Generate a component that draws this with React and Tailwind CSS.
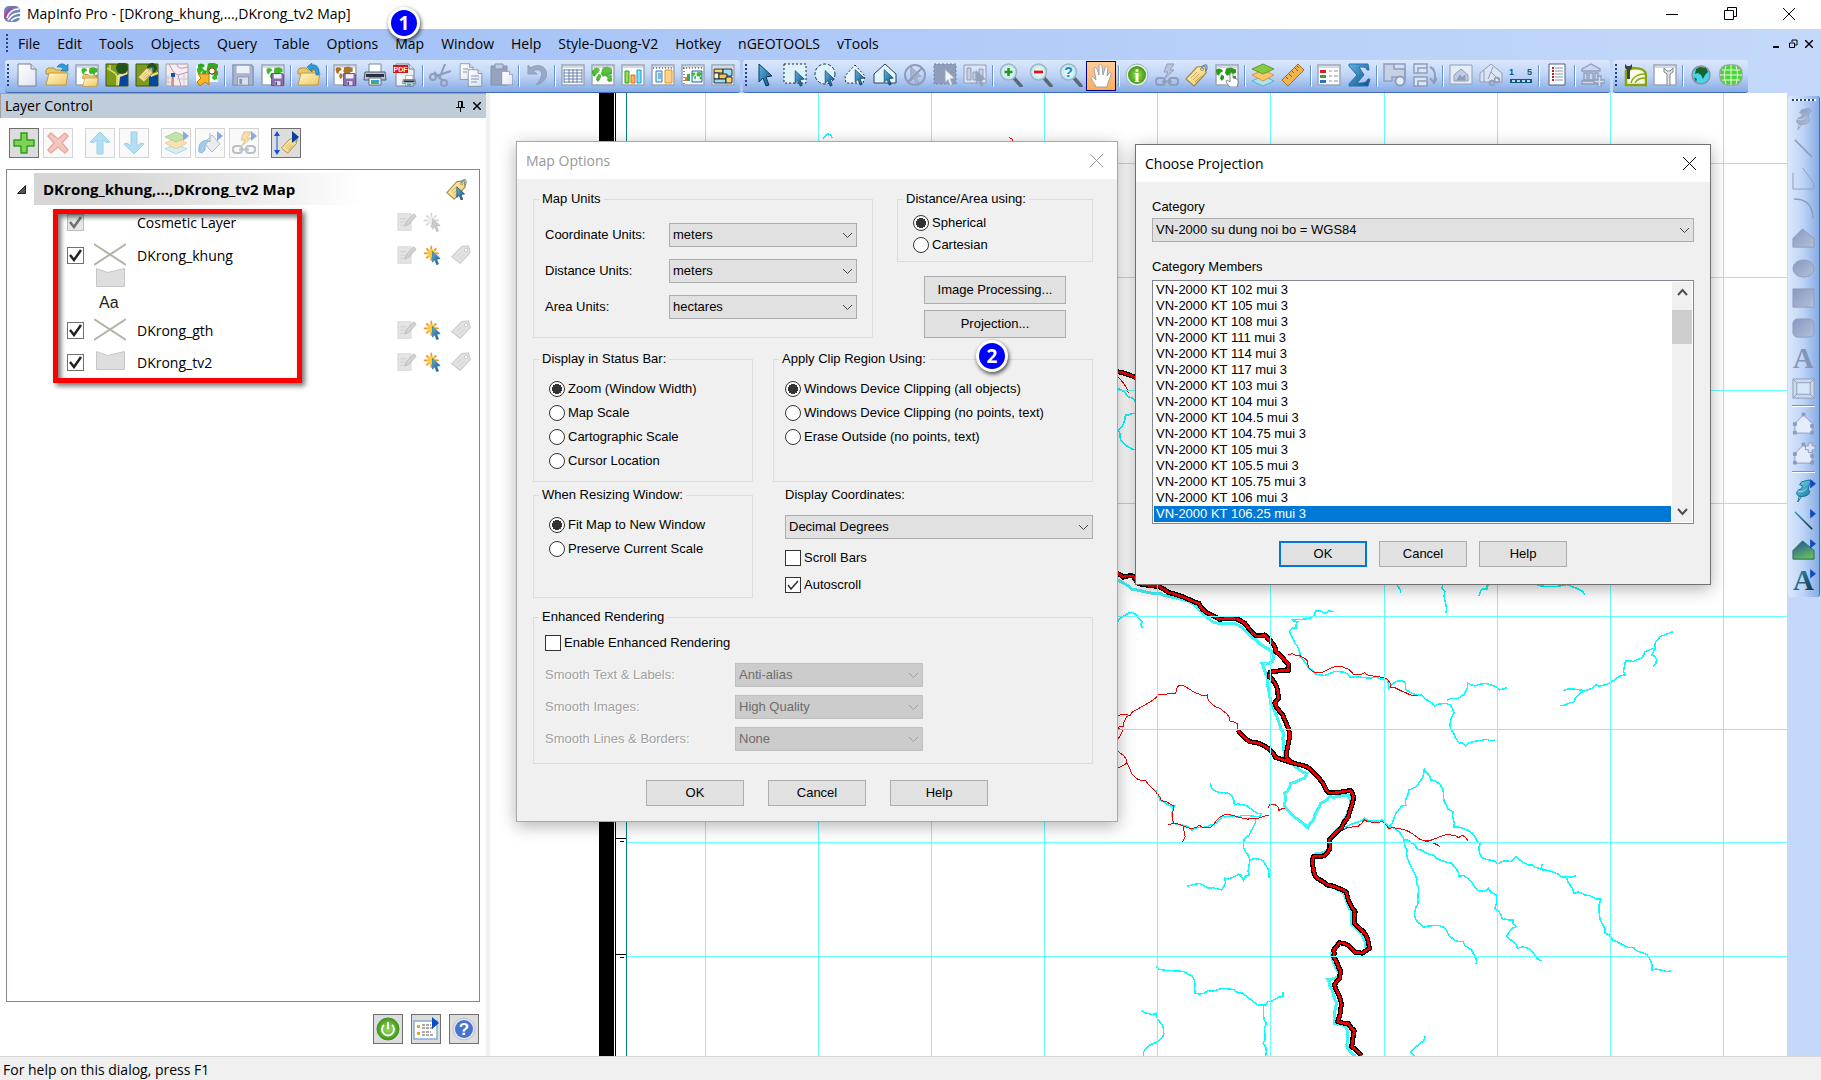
import { clsx } from "clsx";

/* ---------- small drawing parts shared by the toolbar icons ---------- */

const Gradients = () => (
  <svg className="absolute h-0 w-0" aria-hidden="true">
    <defs>
      <linearGradient id="gold" x1="0" y1="0" x2="1" y2="1">
        <stop offset="0" stopColor="#fff8cc" />
        <stop offset="1" stopColor="#eec762" />
      </linearGradient>
      <linearGradient id="blue" x1="0" y1="0" x2="1" y2="1">
        <stop offset="0" stopColor="#5fb4e6" />
        <stop offset="1" stopColor="#0d4f80" />
      </linearGradient>
      <linearGradient id="teal" x1="0" y1="0" x2="1" y2="1">
        <stop offset="0" stopColor="#7fe3f4" />
        <stop offset="1" stopColor="#0b6f96" />
      </linearGradient>
      <linearGradient id="ink" x1="0" y1="0" x2="1" y2="1">
        <stop offset="0" stopColor="#3aa0c8" />
        <stop offset="1" stopColor="#0b2a3c" />
      </linearGradient>
      <linearGradient id="land" x1="0" y1="0" x2="0.4" y2="1">
        <stop offset="0" stopColor="#1f4f9e" />
        <stop offset="1" stopColor="#5fb760" />
      </linearGradient>
      <linearGradient id="steel" x1="0" y1="0" x2="1" y2="1">
        <stop offset="0" stopColor="#8799c0" />
        <stop offset="1" stopColor="#b4c0da" />
      </linearGradient>
      <linearGradient id="paper" x1="0" y1="0" x2="1" y2="1">
        <stop offset="0" stopColor="#ffffff" />
        <stop offset="1" stopColor="#dfe4ef" />
      </linearGradient>
      <radialGradient id="green">
        <stop offset="0" stopColor="#9be05a" />
        <stop offset="1" stopColor="#3d9a17" />
      </radialGradient>
      <radialGradient id="lens">
        <stop offset="0" stopColor="#ffffff" />
        <stop offset="1" stopColor="#b4e6f2" />
      </radialGradient>
    </defs>
  </svg>
);

function Icon({ children, size = 24, className }) {
  return (
    <svg width={size} height={size} viewBox="0 0 24 24" fill="none" className={clsx("shrink-0", className)} aria-hidden="true">
      {children}
    </svg>
  );
}

const Folder = ({ t }) => (
  <g transform={t}>
    <path d="M1 7l2-2h6l2 2h10v4H1z" fill="#ecc76a" stroke="#b58f3a" />
    <path d="M1 22L4 10h19l-2 12z" fill="url(#gold)" stroke="#c29a40" />
  </g>
);
const Disk = ({ t, fill = "#8d6db0", edge = "#5d4383" }) => (
  <g transform={t}>
    <path d="M1 1h20l2 2v20H1z" fill={fill} stroke={edge} strokeWidth="1.5" />
    <path d="M5 2h14v8H5z" fill="#eef0f8" />
    <path d="M6 14h12v9H6z" fill="#dcdfea" stroke={edge} />
    <path d="M8 16h3v6H8z" fill={edge} />
  </g>
);
const Frame = ({ children }) => (
  <g>
    <path d="M1 2h22v20H1z" fill="#fff" stroke="#9aa6b6" strokeWidth="1.5" />
    <path d="M2 3h20v2H2z" fill="#d4dae4" />
    {children}
  </g>
);
const Land = ({ t, c = "#3fb52c" }) => (
  <g transform={t} fill={c}>
    <path d="M2 6l3-1 3 1 1 2-3 2-1 3-2-1-1-3zM7 12l3 1v3l-2 3-2-3zM12 5l5-1 5 2v4l-3 1-1 3-3-2-2 1-2-3zM18 14l4-1v5l-3 1-2-2z" />
  </g>
);
const Pointer = ({ t, fill = "url(#blue)", edge = "#0b3d60" }) => (
  <path transform={t} d="M6 1v18l4-4 3 8 3-1-3-8 6-1z" fill={fill} stroke={edge} />
);
const TagShape = ({ t, fill = "url(#gold)", edge = "#a88a3c" }) => (
  <g transform={t}>
    <path d="M2 16L13 4l8-1 1 7-12 13z" fill={fill} stroke={edge} strokeWidth="1.2" strokeLinejoin="round" />
    <circle cx="18" cy="6" r="1.5" fill="#fff" stroke={edge} />
    <path d="M7 15l6-6M9 17l6-6M11 19l6-6" stroke={edge} strokeWidth=".7" />
    <path d="M18 6c0-4 5-6 5-2s-2 4-2 4" stroke="#4d8dc8" strokeWidth="1.2" />
  </g>
);
const PageShape = ({ t }) => (
  <g transform={t}>
    <path d="M3 1h13l5 5v17H3z" fill="url(#paper)" stroke="#74829c" />
    <path d="M16 1v5h5" fill="#dbe3f0" stroke="#74829c" />
  </g>
);
const PrinterShape = ({ t }) => (
  <g transform={t}>
    <path d="M6 1h12v9H6z" fill="#fff" stroke="#78889c" />
    <path d="M2 9h20l1 8H1z" fill="#b9c3d2" stroke="#4c5a70" />
    <path d="M3 11h18v3H3z" fill="#27303e" />
    <path d="M6 15h12v7H6z" fill="#fff" stroke="#5c6a7c" />
    <path d="M8 17h8v4H8z" fill="#3aa2d8" />
    <path d="M8 20l3-2 5 3H8z" fill="#49b13a" />
  </g>
);
const Lens = ({ children }) => (
  <g>
    <path d="M15 15l7 8" stroke="#5b6873" strokeWidth="3.5" strokeLinecap="round" />
    <circle cx="9.500" cy="9" r="8" fill="url(#lens)" stroke="#9fb4bd" strokeWidth="1.5" />
    {children}
  </g>
);
const Chain = ({ edge }) => (
  <g stroke={edge} strokeWidth="2">
    <rect x="1" y="15" width="9" height="7" rx="3" />
    <rect x="14" y="15" width="9" height="7" rx="3" />
    <path d="M7 18.500h10" />
  </g>
);
const Stack = () => (
  <g strokeWidth=".8">
    <path d="M12 13l11 5-11 5-11-5z" fill="#a9e5f0" stroke="#49a9bf" />
    <path d="M12 7l11 5-11 6-11-6z" fill="#fbc665" stroke="#d98b1d" />
    <path d="M12 1l11 5-11 5L1 6z" fill="#85cc45" stroke="#4a8f1c" />
  </g>
);
const House = ({ plus }) => (
  <g stroke="#8c9cc0">
    <path d="M3 11l9-9 9 9v10H3z" fill="#e4ecfa" />
    <path d="M1.500 19h3v3h-3zM19.500 19h3v3h-3zM1.500 10h3v3h-3zM19.500 12h3v3h-3zM10.500 0h3v3h-3z" fill="#8c9cc0" />
    {plus && <path d="M17 0h4v3h3v4h-3v3h-4V7h-3V3h3z" fill="#dde5f5" />}
  </g>
);
const PinShape = ({ fill, edge }) => (
  <g stroke={edge} strokeWidth="1">
    <path d="M8 16l-2 8 5-7z" fill="#d7dbe3" />
    <path d="M10 3l8-2 3 3-3 2-1 5c3 2 1 6-4 7s-9-1-8-4 3-3 5-4l1-3-3-1z" fill={fill} />
    <path d="M6 13c3 1 7 0 9-3" stroke="#fff" strokeOpacity=".5" />
  </g>
);
const Flag = () => <path d="M19 0l6 5-6 5z" fill="#0a4bc4" />;
const Letter = ({ fill }) => (
  <text x="12" y="22" textAnchor="middle" fontFamily="Liberation Serif, serif" fontWeight="700" fontSize="30" fill={fill}>
    A
  </text>
);

const GREY = "#8f9dba";

const icons = {
  "New Table": <PageShape />,
  Open: (
    <>
      <Folder />
      <path d="M12 4c3-4 7-4 9-1l2-2v7h-7l2-2c-1-2-3-2-6-2z" fill="#2f9bd8" stroke="#1d6ba0" strokeWidth=".6" />
    </>
  ),
  "Open Workspace": (
    <>
      <path d="M1 5h16v16H1z" fill="#fff" stroke="#7d8896" />
      <Frame />
      <Land t="translate(5 1) scale(.8)" />
      <Folder t="translate(7 8) scale(.7)" />
    </>
  ),
  "Open Web Map": (
    <>
      <path d="M1 1h22v22H1z" fill="#7c9c1c" />
      <path d="M12 11h11v12h-9z" fill="#0645a0" />
      <path d="M12 12l11-4v3l-8 3-1 9h-3z" fill="#f2e08a" />
      <circle cx="17" cy="5" r="6" fill="#24521a" />
      <path d="M2 5l8 5 2 3v9M5 2v6" stroke="#d4da70" strokeWidth="1.500" />
      <path d="M1 1h22v22H1z" stroke="#3c5510" />
    </>
  ),
  "Label Map": (
    <>
      <path d="M1 1h22v22H1z" fill="#7c9c1c" stroke="#3c5510" />
      <path d="M14 12h9v11h-9z" fill="#0645a0" />
      <circle cx="17" cy="5" r="5" fill="#24521a" />
      <path d="M15 12l8-3v2l-7 3z" fill="#f2e08a" />
      <TagShape t="translate(2 3) scale(.7)" />
    </>
  ),
  "Street Map": (
    <>
      <path d="M1 1h22v22H1z" fill="#f2eeea" stroke="#a5a3a8" />
      <path d="M4 1l5 9 4 2 10-3M8 11l-2 12M12 1c1 6 6 4 11 3M13 12l3 11" stroke="#c98ad4" />
      <path d="M1 15h6M1 19h6M3 12v11M12 16h11M19 10v13" stroke="#bab4c4" strokeWidth=".7" />
      <path d="M6 10h4v4H6z" fill="#1a4fb0" />
      <path d="M8 14v9" stroke="#d6342a" />
    </>
  ),
  "Find Place": (
    <>
      <path d="M1 2h22v17H1z" fill="#f3fff0" />
      <Land t="scale(1 .9)" />
      <Land t="translate(1 -4) scale(1 .9)" c="#2fa822" />
      <circle cx="17" cy="8" r="3" fill="#fff" stroke="#c8321c" />
      <path d="M15 10l-4 4" stroke="#c8321c" />
      <path d="M3 11h11v11l-4-3-5 4-3-4 4-4z" fill="#f9b62c" stroke="#b9780a" />
    </>
  ),
  "Save Table": <Disk t="translate(1 1) scale(.92)" fill="#a9b5cf" edge="#8694b5" />,
  "Save Workspace": (
    <>
      <path d="M1 5h15v16H1z" fill="#fff" stroke="#7d8896" />
      <Frame />
      <Land t="translate(4 1) scale(.8)" />
      <Disk t="translate(10 10) scale(.55)" />
    </>
  ),
  "Close Table": (
    <>
      <Folder />
      <path d="M14 2c5-1 9 2 8 10h-3c0-4-1-6-4-6v3l-5-5 5-4z" fill="#2f9bd8" stroke="#1d6ba0" strokeWidth=".6" />
    </>
  ),
  "Save Image": (
    <>
      <Frame />
      <Land t="translate(1 0) scale(.85)" c="#a8742c" />
      <Disk t="translate(10 10) scale(.55)" />
    </>
  ),
  Print: <PrinterShape />,
  "Print PDF": (
    <>
      <PageShape />
      <path d="M0 2h15v8H0z" fill="#d81313" />
      <text x="7.500" y="9" textAnchor="middle" fontFamily="Liberation Sans, sans-serif" fontWeight="700" fontSize="7" fill="#fff">
        PDF
      </text>
      <PrinterShape t="translate(9 12) scale(.6 .5)" />
    </>
  ),
  Cut: (
    <g stroke={GREY} strokeWidth="2">
      <path d="M16 1L10 16M5 9l9 9" />
      <circle cx="4" cy="14" r="3" />
      <circle cx="15" cy="20" r="3" />
      <path d="M7 13l15-5" />
    </g>
  ),
  Copy: (
    <>
      <PageShape t="translate(-1 0) scale(.72)" />
      <PageShape t="translate(7 6) scale(.75)" />
      <path d="M4 6h5M4 9h4M12 13h8M12 16h8M12 19h6" stroke="#7d93bb" />
    </>
  ),
  Paste: (
    <>
      <path d="M2 3h16v19H2z" fill="#95a3bf" stroke="#8190ae" />
      <path d="M6 1h8v5H6z" fill="#c3cce0" stroke="#8190ae" />
      <PageShape t="translate(11 8) scale(.6)" />
    </>
  ),
  Undo: <path d="M3 2v9h9L8 8c5-3 11 0 8 6-1 3-3 6-5 8 8-2 12-8 10-14C19 2 11 1 6 5z" fill={GREY} fillOpacity=".8" stroke={GREY} />,
  "New Browser": (
    <Frame>
      <path d="M3 7h18M3 10h18M3 13h18M3 16h18M3 19h18M3 6v14M8 6v14M12 6v14M16 6v14M21 6v14" stroke="#5874a8" strokeWidth=".9" />
    </Frame>
  ),
  "New Mapper": (
    <Frame>
      <Land t="translate(-1 2) scale(1 .9)" />
      <Land t="translate(1 0) scale(.9)" c="#5abf42" />
    </Frame>
  ),
  "New Grapher": (
    <Frame>
      <path d="M4 8h4v12H4z" fill="#8ee05a" stroke="#2f9a1c" />
      <path d="M10 12h4v8h-4z" fill="#ffb25a" stroke="#e06f10" />
      <path d="M16 7h4v13h-4z" fill="#86e0fa" stroke="#1a9ccc" />
    </Frame>
  ),
  "New Layout": (
    <Frame>
      <path d="M2 5h20" stroke="#222" strokeDasharray="1 2" />
      <path d="M5 8h6v11H5z" fill="#d8ecfa" stroke="#2c7cc0" />
      <path d="M7 11h3M7 13h3M7 15h3" stroke="#2c7cc0" />
      <path d="M14 7h7v13h-7z" fill="#ffd38a" stroke="#e49324" />
    </Frame>
  ),
  "Layout Designer": (
    <Frame>
      <path d="M2 5h20M3 5v16" stroke="#222" strokeDasharray="1 2" />
      <path d="M4 14h2v4H4z" fill="#f07a1c" />
      <path d="M6 11h3v7H6z" fill="#2eaa62" />
      <path d="M11 8h10v11H11z" fill="#e8f5ff" stroke="#225fa8" />
      <Land t="translate(10 7) scale(.5)" />
    </Frame>
  ),
  Redistricter: (
    <Frame>
      <g stroke="#162b3a">
        <path d="M3 6h9v4H3z" fill="#ffd267" />
        <path d="M12 6h9v7h-9z" fill="#9fdcf6" />
        <path d="M3 10h5v6H3z" fill="#fff3c4" />
        <path d="M8 11h8v5H8z" fill="#ffc24a" />
        <path d="M3 16h12v4H3z" fill="#9fdcf6" />
        <path d="M15 14h6v6h-6z" fill="#ffd267" />
      </g>
    </Frame>
  ),
  Select: <Pointer />,
  "Marquee Select": (
    <>
      <path d="M1 1h22v19H1z" fill="#dff1fb" stroke="#16283c" strokeDasharray="2 2" />
      <Pointer t="translate(8 7) scale(.7)" />
    </>
  ),
  "Radius Select": (
    <>
      <circle cx="12" cy="11" r="10" fill="#dff1fb" stroke="#16283c" strokeDasharray="3 2" />
      <Pointer t="translate(8 7) scale(.7)" />
    </>
  ),
  "Polygon Select": (
    <>
      <path d="M12 2l10 11-2 7H3l-1-7z" fill="#eaf6fc" stroke="#16283c" strokeDasharray="2 2" />
      <Pointer t="translate(8 6) scale(.7)" />
    </>
  ),
  "Boundary Select": (
    <>
      <path d="M12 1l11 10v9H1v-9z" fill="#e4f4fd" stroke="#26435c" />
      <Pointer t="translate(7 6) scale(.7)" />
    </>
  ),
  "Unselect All": (
    <>
      <Pointer t="translate(3 3) scale(.8)" fill="#a9b6d2" edge={GREY} />
      <circle cx="12" cy="12" r="10" stroke={GREY} strokeWidth="2" />
      <path d="M5 19L19 5" stroke={GREY} strokeWidth="2" />
    </>
  ),
  "Invert Selection": (
    <>
      <path d="M1 1h22v20H1z" fill={GREY} stroke="#7986a5" strokeDasharray="2 2" />
      <Pointer t="translate(8 6) scale(.7)" fill="#f4f6fa" edge="#aab4ca" />
    </>
  ),
  "Graph Select": (
    <>
      <path d="M1 2h22v18H1z" fill="#dce5f5" stroke={GREY} />
      <path d="M4 5h4v12H4zM10 9h3v8h-3zM16 6h4v11h-4z" fill="#c4cfe4" stroke={GREY} />
      <Pointer t="translate(9 7) scale(.7)" fill="#94a2c0" edge={GREY} />
    </>
  ),
  "Zoom In": (
    <Lens>
      <path d="M9.500 5v8M5.500 9h8" stroke="#1f9a10" strokeWidth="2.500" />
    </Lens>
  ),
  "Zoom Out": (
    <Lens>
      <path d="M5 9h9" stroke="#e01414" strokeWidth="2.800" />
    </Lens>
  ),
  "Change View": (
    <Lens>
      <text x="9.500" y="14" textAnchor="middle" fontFamily="Liberation Sans, sans-serif" fontWeight="700" fontSize="14" fill="#1487b8">
        ?
      </text>
    </Lens>
  ),
  Pan: (
    <path
      d="M7 23c-1-3-4-6-5-9 0-2 2-2 3 0l2 2-2-11c0-2 2-2 3 0l2 6V2c0-2 3-2 3 0l1 9 2-7c0-2 3-2 3 0l-1 8 2-3c1-1 3 0 2 2l-3 8-1 4z"
      fill="#fff"
      stroke="#98a0ac"
    />
  ),
  Info: (
    <>
      <circle cx="12" cy="12" r="11" fill="#e9eef0" stroke="#a5b1b5" />
      <circle cx="12" cy="12" r="9" fill="url(#green)" />
      <text x="12" y="18.500" textAnchor="middle" fontFamily="Liberation Serif, serif" fontWeight="700" fontSize="19" fill="#fff">
        i
      </text>
    </>
  ),
  HotLink: (
    <>
      <path d="M12 1h7l-4 6h4l-9 8 3-6H9z" fill="#b9c4da" stroke={GREY} />
      <Chain edge={GREY} />
    </>
  ),
  Label: <TagShape t="translate(-1 0)" />,
  "Drag Map": (
    <>
      <Frame />
      <Land t="translate(-1 1) scale(1 .9)" c="#2a9a1c" />
      <path d="M15 24c-3-3-5-6-3-7l3 2v-8c1-2 2-1 3 0v4l4 1c2 1 1 5 0 8z" fill="#fff" stroke="#7e8790" />
    </>
  ),
  "Layer Control": <Stack />,
  Ruler: (
    <>
      <path d="M1 17L17 1l6 6L7 23z" fill="#f0b552" stroke="#a5681c" />
      <path d="M5 14l2 2M8 11l3 3M11 8l2 2M14 5l3 3M16 3l2 2" stroke="#8a5a18" />
    </>
  ),
  "Show Legend": (
    <Frame>
      <path d="M3 7h6v3H3z" fill="#e02020" />
      <path d="M3 12h6v3H3z" fill="#38a33a" />
      <path d="M3 17h6v3H3z" fill="#2f70c4" />
      <path d="M12 8h3M17 8h4M12 13h3M17 13h4M12 18h3M17 18h4" stroke="#8391a8" />
    </Frame>
  ),
  Statistics: <path d="M2 1h19l1 6h-2c-1-3-2-3-8-3l5 8-7 8c7 0 9 0 11-4h2l-2 7H2v-2l8-9-8-9z" fill="url(#blue)" stroke="#276fb0" />,
  "Set Target": (
    <g stroke={GREY} strokeWidth="1.500">
      <path d="M1 1h10v5h11v12h-8v-4H9v4H1z" fill="#c6d1e6" />
      <path d="M11 1h11v16" />
      <circle cx="17" cy="18" r="4.500" fill="#e6ecf7" strokeWidth="2" />
    </g>
  ),
  "Assign Objects": (
    <g stroke={GREY} strokeWidth="1.500">
      <path d="M1 1h13v9H1zM5 5h9v5H5zM1 14h13v9H1zM5 18h9v5H5z" fill="#dbe4f4" />
      <path d="M17 4c5 2 6 8 4 14M17 15l4 5 3-5" strokeWidth="2" />
    </g>
  ),
  "Clip Region": (
    <g stroke={GREY}>
      <path d="M1 2h22v19H1z" fill="#e6ecf6" />
      <path d="M5 12l7-6 7 6v6H5z" fill="#c1cce2" />
      <path d="M8 17l3-5 2 3 3-3v5z" fill={GREY} />
    </g>
  ),
  "Set Clip Region": (
    <g stroke={GREY}>
      <path d="M1 10l11-9 11 9v9H1z" fill="#dce5f4" />
      <path d="M5 19V7M9 16l5-12M12 9l8 8" />
      <circle cx="13" cy="20" r="2.500" strokeWidth="1.500" />
      <circle cx="18" cy="17" r="2.500" strokeWidth="1.500" />
    </g>
  ),
  "Scale Bar": (
    <>
      <path d="M1 16h22v4H1z" fill="#0b5a7a" />
      <path d="M3 18h18" stroke="#fff" strokeWidth="1.500" strokeDasharray="3 2" />
      <text x="0" y="12" fontFamily="Liberation Sans, sans-serif" fontSize="9" fontWeight="700" fill="#0b5a7a">
        1
      </text>
      <text x="18" y="12" fontFamily="Liberation Sans, sans-serif" fontSize="9" fontWeight="700" fill="#0b5a7a">
        5
      </text>
    </>
  ),
  "Library Items": (
    <>
      <path d="M4 1h16v21H4z" fill="#fff" stroke="#4d6080" />
      <path d="M7 5h2M7 8h2M7 11h2M7 14h2M7 17h2" stroke="#c02020" strokeWidth="2" />
      <path d="M10 5h8M10 8h8M10 11h8M10 14h8M10 17h8" stroke="#8b97aa" />
    </>
  ),
  "Data Bank": (
    <g stroke={GREY} strokeWidth="1.300">
      <path d="M1 6l9-5 9 5v2H1zM3 10h3v7H3zM8 10h4v7H8zM14 10h3v7h-3zM1 18h18v3H1z" fill="#ccd6ea" />
      <path d="M17 13h3v4h4v3h-4v4h-3v-4h-4v-3h4z" fill="#d4def0" />
    </g>
  ),
  "Geo Tools": (
    <>
      <path d="M3 8v14h20V13C23 7 19 5 10 5z" fill="#f7fbe6" stroke="#8aa30c" strokeWidth="2.500" />
      <path d="M8 20c2-7 7-9 14-9M12 20c2-4 5-5 10-5" stroke="#8aa81c" strokeWidth="1.500" />
      <path d="M2 1v4l2 2v9h3V7l2-2V1L7 3H4z" fill="#3c4146" />
    </>
  ),
  "Tool Settings": (
    <Frame>
      <path d="M11 5v4l3 2v10c0 2 3 2 3 0V11l3-2V5l-3 3h-3z" fill="#e0e4ea" stroke="#7d858f" />
    </Frame>
  ),
  Globe: (
    <>
      <circle cx="12" cy="12" r="9" fill="#46d4f0" stroke="#8e9296" strokeWidth="1.500" />
      <path d="M7 6l4-2 6 1 2 4-3 3-2 4-2-4-3-2-3 1zM5 14l3 2-1 3z" fill="#14672a" />
    </>
  ),
  "Web Globe": (
    <>
      <rect x="1" y="2" width="22" height="20" rx="8" fill="#4fd03c" stroke="#9aa6a4" strokeWidth="1.500" />
      <path d="M12 2v20M1 12h22M3 7h18M3 17h18M7 3c-2 6-2 12 0 18M17 3c2 6 2 12 0 18" stroke="#e4ffdf" />
    </>
  ),
};

const drawTools = [
  { name: "Symbol", art: <PinShape fill="url(#steel)" edge="#9aa7c2" /> },
  { name: "Line", art: <path d="M3 3l18 18" stroke={GREY} strokeWidth="1.500" /> },
  { name: "Polyline", art: <path d="M1 6v17h22v-6L11 1" stroke={GREY} /> },
  { name: "Arc", art: <path d="M2 2c12 0 19 5 20 20" stroke={GREY} strokeWidth="1.500" /> },
  { name: "Polygon", art: <path d="M1 12L11 2l12 10v9H1z" fill="url(#steel)" stroke={GREY} /> },
  { name: "Ellipse", art: <ellipse cx="12" cy="12" rx="11" ry="9" fill="url(#steel)" stroke={GREY} /> },
  { name: "Rectangle", art: <path d="M1 2h22v19H1z" fill="url(#steel)" stroke={GREY} /> },
  { name: "Rounded Rectangle", art: <rect x="1" y="2" width="22" height="19" rx="5" fill="url(#steel)" stroke={GREY} /> },
  { name: "Text", art: <Letter fill="#8595b8" /> },
  {
    name: "Frame",
    art: (
      <>
        <path d="M1 2h22v20H1z" fill="#cdd8ea" stroke={GREY} />
        <path d="M5 6h14v12H5z" fill="#d9e6fa" stroke={GREY} />
        <path d="M1 2l4 4M23 2l-4 4M1 22l4-4M23 22l-4-4" stroke={GREY} />
      </>
    ),
  },
  null,
  { name: "Reshape", art: <House /> },
  { name: "Add Node", art: <House plus /> },
  null,
  { name: "Symbol Style", art: <><PinShape fill="url(#teal)" edge="#126f94" /><Flag /></> },
  { name: "Line Style", art: <><path d="M3 3l18 18" stroke="url(#ink)" strokeWidth="1.500" /><Flag /></> },
  { name: "Region Style", art: <><path d="M1 12L11 2l12 10v9H1z" fill="url(#land)" stroke="#2f6b52" /><Flag /></> },
  { name: "Text Style", art: <><Letter fill="url(#ink)" /><Flag /></> },
];

const toolbars = [
  [
    ["New Table", "Open", "Open Workspace", "Open Web Map", "Label Map", "Street Map", "Find Place"],
    ["Save Table", "Save Workspace"],
    ["Close Table"],
    ["Save Image", "Print", "Print PDF"],
    ["Cut", "Copy", "Paste"],
    ["Undo"],
    ["New Browser", "New Mapper", "New Grapher", "New Layout", "Layout Designer", "Redistricter"],
  ],
  [
    ["Select", "Marquee Select", "Radius Select", "Polygon Select", "Boundary Select", "Unselect All", "Invert Selection", "Graph Select"],
    ["Zoom In", "Zoom Out", "Change View", "Pan"],
    ["Info", "HotLink", "Label", "Drag Map"],
    ["Layer Control", "Ruler"],
    ["Show Legend", "Statistics"],
    ["Set Target", "Assign Objects"],
    ["Clip Region", "Set Clip Region", "Scale Bar"],
    ["Library Items"],
    ["Data Bank"],
  ],
  [
    ["Geo Tools", "Tool Settings"],
    ["Globe", "Web Globe"],
  ],
];

/* ---------- window chrome ---------- */

function TitleBar() {
  return (
    <header className="flex h-[29px] items-center bg-white pb-0.5">
      <svg width="16" height="16" viewBox="0 0 16 16" className="ml-1" aria-hidden="true">
        <rect width="16" height="16" rx="5" fill="#6d86b8" />
        <path d="M0 11C1 4 6 1 13 0 6 3 3 6 2 14z" fill="#c23a9e" />
        <path d="M3 12c2-6 6-9 12-9M4 14c3-5 7-7 12-7M7 15c3-3 5-4 9-4" stroke="#fff" strokeWidth="1.500" fill="none" />
      </svg>
      <h1 className="ml-[7px] text-[14px] leading-5">MapInfo Pro - [DKrong_khung,...,DKrong_tv2 Map]</h1>
      <div className="ml-auto flex pr-0.5">
        <button aria-label="Minimize" className="grid h-7 w-[58px] place-items-center">
          <svg width="12" height="12" stroke="#000"><path d="M0 6.500h12" /></svg>
        </button>
        <button aria-label="Restore" className="grid h-7 w-[58px] place-items-center">
          <svg width="13" height="13" fill="none" stroke="#000"><path d="M.5 3.500h9v9h-9zM3.500 3.500v-3h9v9h-3" /></svg>
        </button>
        <button aria-label="Close" className="grid h-7 w-[60px] place-items-center">
          <svg width="12" height="12" stroke="#000"><path d="M0 0l12 12M12 0L0 12" /></svg>
        </button>
      </div>
    </header>
  );
}

const menus = ["File", "Edit", "Tools", "Objects", "Query", "Table", "Options", "Map", "Window", "Help", "Style-Duong-V2", "Hotkey", "nGEOTOOLS", "vTools"];

function MenuBar() {
  return (
    <nav className="flex h-[31px] items-center pb-0.5">
      <span className="ml-1.5 h-5 w-0.5 bg-[repeating-linear-gradient(#27408b_0_2px,transparent_2px_4px)]" />
      <div className="ml-0.5 flex gap-px">
        {menus.map((m) => (
          <button key={m} className="px-2 text-[14px] leading-6">{m}</button>
        ))}
      </div>
      <div className="ml-auto flex pr-1">
        <button aria-label="Minimize map" className="grid h-5 w-4 place-items-center">
          <svg width="8" height="8"><path d="M0 6h6v2H0z" /></svg>
        </button>
        <button aria-label="Restore map" className="grid h-5 w-4 place-items-center">
          <svg width="9" height="9" fill="none" stroke="#000"><path d="M.5 4h5v4.500h-5zM3 3V1h5v5H6" /></svg>
        </button>
        <button aria-label="Close map" className="grid h-5 w-4 place-items-center">
          <svg width="8" height="8" stroke="#000" strokeWidth="1.500"><path d="M0 0l8 8M8 0L0 8" /></svg>
        </button>
      </div>
    </nav>
  );
}

function Toolbar({ groups }) {
  return (
    <div className="flex h-[33px] rounded-[3px] border-b border-[#3f6db5] bg-linear-to-b from-[#dbe8fc] via-[#bdd3f6] to-[#86abe4] pr-0.5">
      <span className="my-1 mr-[3px] ml-0.5 w-0.5 bg-[repeating-linear-gradient(#27408b_0_2px,transparent_2px_4px)]" />
      {groups.map((group, i) => (
        <div key={i} className="flex">
          {i > 0 && <span className="mx-0.5 my-[5px] w-0.5 border-r border-white bg-[#6a93d4]" />}
          {group.map((name) => (
            <button
              key={name}
              aria-label={name}
              className={clsx(
                "grid h-[30px] w-[30px] place-items-center",
                name === "Pan" && "mt-px border border-[#000080] bg-linear-to-b from-[#ffce94] to-[#ffab55]"
              )}
            >
              <Icon>{icons[name]}</Icon>
            </button>
          ))}
        </div>
      ))}
    </div>
  );
}

function DrawToolbar() {
  return (
    <aside className="w-[34px] shrink-0 bg-[#c4d9fa] pt-[3px] pl-px">
      <div className="flex w-8 flex-col items-center rounded-[3px] border-r border-[#3f6db5] bg-linear-to-r from-[#dbe8fc] via-[#bdd3f6] to-[#86abe4] pb-0.5">
        <span className="mt-[3px] mb-0.5 h-0.5 w-6 bg-[repeating-linear-gradient(90deg,#27408b_0_2px,#fff_2px_4px)]" />
        {drawTools.map((t, i) =>
          t ? (
            <button key={i} aria-label={t.name} className="grid h-[30px] w-[30px] place-items-center">
              <Icon size={23} className="overflow-visible">{t.art}</Icon>
            </button>
          ) : (
            <span key={i} className="my-0.5 h-0.5 w-[23px] border-b border-white bg-[#6a93d4]" />
          )
        )}
      </div>
    </aside>
  );
}

/* ---------- layer control ---------- */

const layerButtons = [
  { name: "Add Layers", on: true, art: <path d="M9 2h6v7h7v6h-7v7H9v-7H2V9h7z" fill="#7fd455" stroke="#2f9d1d" strokeWidth="1.500" strokeLinejoin="round" /> },
  { name: "Remove Layers", art: <path d="M2 5l3-3 7 6 7-6 3 3-6 7 6 7-3 3-7-6-7 6-3-3 6-7z" fill="#f08a7c" stroke="#d9483b" strokeWidth="1.500" strokeLinejoin="round" /> },
  { name: "Move Up", gap: true, art: <path d="M12 1l10 10-3 1-4-3v14H9V9l-4 3-3-1z" fill="#5fc0f0" stroke="#2c9fdc" /> },
  { name: "Move Down", art: <path d="M12 23L2 13l3-1 4 3V1h6v14l4-3 3 1z" fill="#5fc0f0" stroke="#2c9fdc" /> },
  { name: "Layer Properties", gap: true, art: <><Stack /><Flag /></> },
  {
    name: "Style Override",
    art: (
      <>
        <path d="M6 12l8-8 8 9-8 8z" fill="#d7dde6" stroke="#5d6b80" />
        <path d="M1 21c-1-9 3-13 11-11-4 1-5 4-5 9l-3 3z" fill="#2f9bd8" stroke="#1d6ba0" />
        <path d="M12 11V2" stroke="#5d6b80" />
        <Flag />
      </>
    ),
  },
  { name: "HotLink Options", art: <><path d="M12 1h7l-4 6h4l-9 8 3-6H9z" fill="#f6c143" stroke="#c08a18" /><Chain edge="#71798a" /><Flag /></> },
  {
    name: "Label Options",
    on: true,
    gap: true,
    art: (
      <>
        <path d="M3 2v20" stroke="#1550d8" />
        <path d="M3 0L0 5h6zM3 24l-3-5h6z" fill="#1550d8" />
        <TagShape t="translate(6 5) scale(.75)" />
        <path d="M18 0l7 6-7 6z" fill="#0a3f9c" />
      </>
    ),
  },
];

function PanelButton({ name, on, gap, children }) {
  return (
    <button
      aria-label={name}
      disabled={!on}
      className={clsx(
        "grid h-[30px] w-[30px] place-items-center border",
        on ? "border-[#707070] bg-[#dddddd]" : "border-[#d4d4d4] bg-[#f9f9f9]",
        gap && "ml-2"
      )}
    >
      <Icon className={clsx("overflow-visible", !on && "opacity-45")}>{children}</Icon>
    </button>
  );
}

const LineSample = () => (
  <svg width="32" height="24" className="block" stroke="#b4b3a8" strokeWidth="2"><path d="M0 1l32 21M32 1L0 22" /></svg>
);
const RegionSample = () => (
  <svg width="32" height="20" className="block" fill="#dedede" stroke="#c6c6c6"><path d="M2.500 1.500l11 4 17-4v18h-28z" /></svg>
);

const layers = [
  { name: "Cosmetic Layer", disabled: true, symbols: [], className: "" },
  { name: "DKrong_khung", symbols: ["line", "region", "text"], className: "mt-[9px]" },
  { name: "DKrong_gth", symbols: ["line"], className: "mt-[3px]" },
  { name: "DKrong_tv2", symbols: ["region"], className: "mt-2" },
];

function LayerRow({ layer }) {
  const { name, disabled, symbols, className } = layer;
  return (
    <li className={clsx("flex items-start pr-2 pl-[60px]", className)}>
      <label className="flex flex-1 items-start">
        <span className="grid h-6 w-[17px] place-items-center">
          <input
            type="checkbox"
            defaultChecked
            disabled={disabled}
            className="col-start-1 row-start-1 h-[17px] w-[17px] appearance-none border border-[#707070] bg-white disabled:border-[#bcbcbc] disabled:bg-[#e6e6e6]"
          />
          <svg width="13" height="13" viewBox="0 0 13 13" fill="none" stroke={disabled ? "#707070" : "#212121"} strokeWidth="2.500" className="pointer-events-none col-start-1 row-start-1">
            <path d="M1 6l4 5 7-10" />
          </svg>
        </span>
        <span className="ml-2.5 block w-8">
          {symbols.map((s) =>
            s === "line" ? (
              <LineSample key={s} />
            ) : s === "region" ? (
              <RegionSample key={s} />
            ) : (
              <span key={s} className="mt-1 block h-6 pl-[5px] font-['Liberation_Sans',sans-serif] text-[16px] leading-6 text-[#222]">Aa</span>
            )
          )}
        </span>
        <span className="ml-[11px] pt-0.5 text-[14px] leading-[22px]">{name}</span>
      </label>
      <button aria-label={"Edit " + name} className="grid h-6 w-5 place-items-center">
        <Icon size={20}>
          <path d="M1 2h16v20H1z" fill="#e4e4e4" stroke="#d6d6d6" />
          <path d="M9 17l2-5L20 2l3 3-9 10z" fill="#d2d2d2" stroke="#bababa" />
          <path d="M4 8h7M4 12h5M4 16h4" stroke="#cacaca" />
        </Icon>
      </button>
      <button aria-label={"Select " + name} className="ml-1.5 grid h-6 w-[18px] place-items-center">
        <Icon size={20}>
          <path d="M10 1v18M1 10h18M4 4l12 12M16 4L4 16" stroke={disabled ? "#d4d4d4" : "#f0941a"} strokeWidth="2" />
          <circle cx="10" cy="10" r="5" fill={disabled ? "#ececec" : "#ffc93d"} />
          <Pointer t="translate(7 7) scale(.72)" fill={disabled ? "#c8c8c8" : "url(#blue)"} edge={disabled ? "#bababa" : "#1f679c"} />
        </Icon>
      </button>
      <span className="ml-2.5 block h-6 w-5">
        {!disabled && (
          <button aria-label={"Label " + name} className="grid h-6 w-5 place-items-center">
            <Icon size={20}>
              <path d="M1 14L13 2l8-1 2 8-12 13z" fill="#e2e2e2" stroke="#cfcfcf" strokeWidth="1.500" />
              <path d="M7 14l6-6M10 17l6-6" stroke="#cacaca" />
              <circle cx="18" cy="6" r="2" fill="#fff" stroke="#c4c4c4" />
            </Icon>
          </button>
        )}
      </span>
    </li>
  );
}

function LayerPanel() {
  return (
    <section className="flex w-[490px] shrink-0 flex-col border-r-4 border-[#f0f0f0] bg-white">
      <div className="flex h-[25px] items-center border-t border-l border-[#a0a0a0] bg-[#bfcddb] pl-1">
        <h2 className="text-[14px] leading-5">Layer Control</h2>
        <button aria-label="Auto Hide" className="mr-2 ml-auto">
          <svg width="9" height="11" fill="none" stroke="#000"><path d="M2.500 6V.5h4V6M0 6.500h9M4.500 7v4M5.500 1v5" /></svg>
        </button>
        <button aria-label="Close panel" className="mr-[5px]">
          <svg width="8" height="8" stroke="#000" strokeWidth="1.500"><path d="M0 0l8 8M8 0L0 8" /></svg>
        </button>
      </div>
      <div className="flex gap-1 px-[9px] py-2.5">
        {layerButtons.map((b) => (
          <PanelButton key={b.name} name={b.name} on={b.on} gap={b.gap}>{b.art}</PanelButton>
        ))}
      </div>
      <div className="relative mx-1.5 mt-px flex-1 border border-[#828790] pt-[3px]">
        <div className="flex h-8 items-center pr-3 pl-2.5">
          <svg width="9" height="9" aria-hidden="true"><path d="M8.500.5v8h-8z" fill="#555" stroke="#222" /></svg>
          <h3 className="ml-2 flex h-8 flex-1 items-center bg-linear-to-r from-[#d6d6d6] from-20% to-white to-80% pl-[9px] text-[15px] font-bold">DKrong_khung,...,DKrong_tv2 Map</h3>
          <Icon size={22}>
            <TagShape />
            <Pointer t="translate(9 9) scale(.65)" />
          </Icon>
        </div>
        <ul className="pt-[5px]">
          {layers.map((l) => (
            <LayerRow key={l.name} layer={l} />
          ))}
        </ul>
        <div className="pointer-events-none absolute top-[39px] left-[46px] h-[174px] w-[249px] border-5 border-[#ff0000] shadow-[3px_3px_5px_rgba(0,0,0,0.55),inset_3px_3px_5px_rgba(0,0,0,0.55)]" />
      </div>
      <div className="flex justify-end gap-2 px-[7px] pt-3 pb-3">
        <PanelButton name="Auto Apply" on>
          <circle cx="12" cy="12" r="11" fill="url(#green)" stroke="#4d8f2c" />
          <path d="M8 8a6 6 0 108 0M12 5v7" stroke="#fff" strokeWidth="2" />
        </PanelButton>
        <PanelButton name="List Options" on>
          <path d="M0 4h23v18H0z" fill="#fff" stroke="#86aed0" strokeWidth="1.500" />
          <path d="M3 8h3v3H3zM3 15h3v3H3z" fill="#f0a51c" />
          <path d="M8 8h9M8 11h11M8 15h9M8 18h11" stroke="#555" strokeDasharray="3 1" />
          <path d="M18 0l7 6-7 6z" fill="#0a4bc4" />
        </PanelButton>
        <PanelButton name="Help" on>
          <circle cx="12" cy="12" r="11" fill="#e2e6f0" stroke="#b9c1d2" />
          <circle cx="12" cy="12" r="9" fill="#4a72cf" />
          <text x="12" y="18" textAnchor="middle" fontFamily="Liberation Sans, sans-serif" fontWeight="700" fontSize="17" fill="#fff">?</text>
        </PanelButton>
      </div>
    </section>
  );
}

/* ---------- map window ---------- */

function trace(raw, wobble) {
  const n = raw.split(" ").map(Number);
  const pts = [];
  for (let i = 0; i < n.length; i += 2) pts.push([1100 + n[i] * 0.4598, 560 + n[i + 1] / 3]);
  let d = `M${pts[0][0].toFixed(1)} ${pts[0][1].toFixed(1)}`;
  let k = n[0];
  for (let i = 1; i < pts.length; i++) {
    const [ax, ay] = pts[i - 1];
    const [bx, by] = pts[i];
    const len = Math.hypot(bx - ax, by - ay);
    const steps = Math.max(1, Math.round(len / 4));
    for (let s = 1; s <= steps; s++) {
      k += 1;
      const off = s === steps ? 0 : Math.sin(k * 12.9898) * wobble;
      const t = s / steps;
      d += `L${(ax + (bx - ax) * t - ((by - ay) / len) * off).toFixed(1)} ${(ay + (by - ay) * t + ((bx - ax) / len) * off).toFixed(1)}`;
    }
  }
  return d;
}

const streams = [
  "38 185 72 157 92 185 92 203",
  "508 155 490 160 470 152 465 168 415 178 430 185 428 205 412 212 424 250 434 290 450 315 462 330 480 345 520 335 545 353 600 348 625 358 628 385 655 362 664 368 665 388 700 405 728 438 762 435 770 460 762 485 770 520 780 548 795 557 840 538 860 540",
  "755 420 785 410 800 370 815 378 850 375 868 390 885 383",
  "1246 215 1212 240 1208 265 1185 275 1170 298 1143 302 1142 345 1110 368 1078 375 1055 392 1008 392",
  "1055 392 1030 428 1000 437",
  "1208 265 1200 285 1210 298 1202 320",
  "240 670 255 695 280 700 292 735 320 738 352 762",
  "338 775 325 825 312 850 322 885 326 900 345 897 360 915 368 953",
  "326 900 325 945 312 960 302 942 272 955 265 990 235 985 225 975 190 978",
  "115 685 130 720 162 738 158 790 200 810 240 795 265 770 300 772 350 768",
  "530 810 575 775 615 780 628 800 655 825 668 870 688 970 692 1030 686 1075 705 1102 748 1102 762 1130 790 1145 808 1170 818 1213",
  "628 800 650 750 665 735 672 690 695 665 705 628 720 660 745 685 753 735 768 755 770 802 810 820 827 850 830 892 865 912 895 905 905 890 940 915 962 930 1005 952 1035 948",
  "962 930 962 912",
  "1015 955 1030 1000 1055 1005 1090 1018 1088 1080 1098 1120 1115 1140 1160 1162 1190 1185 1200 1230 1243 1232",
  "662 838 690 868 725 885 765 910 780 948 800 955 825 993 845 985 862 1005 858 1045 875 1078 898 1080 905 1100 885 1128 908 1165 935 1168 960 1203",
  "122 1220 155 1232 190 1242 205 1260 207 1300 235 1292 265 1285 300 1298 352 1335 365 1325 398 1310 398 1297",
  "356 1335 362 1390 355 1450 360 1488",
  "90 1352 122 1360 138 1410 130 1440 105 1458 95 1488",
  "708 1428 675 1475 683 1488",
  "645 72 654 100",
  "745 75 750 95 752 160",
  "848 72 842 88 828 92 824 108",
  "950 75 1015 74 1055 104",
  "38 -515 60 -490 80 -470",
  "80 -440 55 -435 40 -390 45 -360 80 -330",
  "-602 -1265 -592 -1278 -582 -1265",
];
const thinRoads = [
  "38 467 65 467 85 445 128 402 165 402 172 375 215 402 233 405 245 435 270 455 283 485 298 490 300 512",
  "60 467 52 500 38 505 50 510 38 538",
  "38 572 45 580 58 608 38 625",
  "58 608 75 650 100 662 133 722 160 738 160 790 148 795",
  "160 792 200 805 215 795 240 803 270 765 330 775 368 765",
  "183 797 185 830 180 845",
  "365 745 370 732 382 735 388 752 402 745",
  "410 285 425 285 450 300 455 325 475 337 515 320 535 325 552 345 575 338 622 355 632 382 665 398 692 406",
  "530 810 560 800 575 780 615 785 628 805 672 815 705 842 750 825 780 833 788 825 800 842",
  "705 842 740 862",
  "38 -550 62 -500",
  "-198 -1268 -188 -1252",
];
const highways = [
  "38 -565 80 -545",
  "38 40 50 52 72 48 82 70 128 78 150 98 215 130 225 150 260 178 300 178 315 190 340 228 358 225 378 255 382 275 410 312 410 332 370 336 368 350 384 380 388 415 380 430 398 465 412 520 405 590 415 605 450 620 485 670 497 698 545 692 551 710 540 770 525 805 498 840 500 865 488 887 465 888 462 900 468 948 495 975 535 995 540 1020 555 1055 553 1090 578 1125 586 1165 570 1180 555 1178 535 1152 520 1148 508 1170 508 1190 524 1235 522 1255 510 1275 522 1315 524 1345 517 1385 540 1390 553 1412 547 1460 569 1488",
  "300 510 325 545 345 550 370 570 382 592 400 600 420 608",
];
const river = [
  "38 60 70 90 130 100 200 130 250 188 300 195 340 240 375 275 375 305 352 310 365 350 370 430 400 520 400 590 420 612",
  "415 610 450 640 445 655 415 670 402 700 402 740 452 803 465 780 480 730 500 710 540 705 545 730 525 800 500 835 496 870 470 880 460 895 464 948",
  "500 980 530 1000 548 1055 548 1095 572 1130 578 1165",
  "530 1145 515 1150 503 1180 518 1235 518 1252 495 1258 500 1280 515 1330 510 1390 535 1400 537 1460 555 1488",
];

const columns = [705, 818, 931, 1044, 1157, 1270, 1384, 1497, 1610, 1723];
const rows = [163, 277, 390, 503, 616, 729, 842, 956];

function MapCanvas() {
  return (
    <svg viewBox="490 93 1297 963" preserveAspectRatio="xMinYMin slice" fill="none" shapeRendering="crispEdges" className="min-h-0 min-w-0 flex-1 bg-white" role="img" aria-label="Map">
      <path d="M599 93h15v1200h-15zM615 93h1v1200h-1z" fill="#000" />
      <path d="M616 838.500h10M616 954.500h10M620 841.500h4M620 957.500h4" stroke="#000" />
      {river.map((r) => (
        <path key={r} d={trace(r, 1)} stroke="#3df5f7" strokeWidth="3" />
      ))}
      {streams.map((s) => (
        <path key={s} d={trace(s, 1.8)} stroke="#00ffff" strokeWidth="1.500" />
      ))}
      {thinRoads.map((s) => (
        <path key={s} d={trace(s, 1.4)} stroke="#f00000" />
      ))}
      {highways.map((h) => (
        <path key={h} d={trace(h, 0.7)} stroke="#000" strokeWidth="5" strokeLinejoin="round" />
      ))}
      {highways.map((h) => (
        <path key={h} d={trace(h, 0.7)} stroke="#f00000" strokeWidth="2.500" strokeLinejoin="round" />
      ))}
      <path d="M626.500 93v1200" stroke="#008080" />
      {columns.map((x) => (
        <path key={x} d={`M${x}.5 93v1200`} stroke="#66ffff" />
      ))}
      {rows.map((y) => (
        <path key={y} d={`M627 ${y}.5h1800`} stroke="#66ffff" />
      ))}
    </svg>
  );
}

/* ---------- dialogs ---------- */

function Dialog({ title, inactive, className, children }) {
  return (
    <div
      role="dialog"
      aria-label={title}
      className={clsx(
        "absolute border bg-[#f0f0f0] font-['Liberation_Sans',sans-serif] text-[13px] leading-4 shadow-[0_4px_16px_rgba(0,0,0,0.3)]",
        inactive ? "border-[#a8a8a8]" : "border-[#707070]",
        className
      )}
    >
      <div className="flex h-[37px] items-center bg-white pr-3.5 pl-[9px]">
        <h2 className={clsx("font-['Open_Sans','Noto_Sans',sans-serif] text-[14px]", inactive && "text-[#999]")}>{title}</h2>
        <button aria-label={"Close " + title} className="ml-auto">
          <svg width="13" height="13" stroke={inactive ? "#999" : "#000"}><path d="M0 0l13 13M13 0L0 13" /></svg>
        </button>
      </div>
      {children}
    </div>
  );
}

function Group({ title, className, children }) {
  return (
    <fieldset className={clsx("border border-[#dcdcdc]", className)}>
      <legend className="ml-[5px] px-[3px]">{title}</legend>
      {children}
    </fieldset>
  );
}

function Radio({ name, label, checked, className = "h-6" }) {
  return (
    <label className={clsx("flex items-center gap-[3px]", className)}>
      <input
        type="radio"
        name={name}
        defaultChecked={checked}
        className="h-4 w-4 appearance-none rounded-full border border-[#333] bg-white checked:bg-[radial-gradient(circle,#333_0_5px,#fff_5px)]"
      />
      {label}
    </label>
  );
}

function Check({ label, checked, className }) {
  return (
    <label className={clsx("flex items-center gap-[3px]", className)}>
      <span className="grid place-items-center">
        <input type="checkbox" defaultChecked={checked} className="peer col-start-1 row-start-1 h-4 w-4 appearance-none border border-[#333] bg-white" />
        <svg width="12" height="12" fill="none" stroke="#333" strokeWidth="1.500" className="pointer-events-none invisible col-start-1 row-start-1 peer-checked:visible">
          <path d="M1 6l3 4 7-8" />
        </svg>
      </span>
      {label}
    </label>
  );
}

function Select({ id, value, disabled, className }) {
  return (
    <span className={clsx("grid items-center", className)}>
      <select
        id={id}
        disabled={disabled}
        defaultValue={value}
        className="col-start-1 row-start-1 h-6 w-full appearance-none border border-[#adadad] bg-[#e1e1e1] pl-[3px] text-[13px] leading-4 disabled:border-[#bfbfbf] disabled:bg-[#cccccc] disabled:text-[#6d6d6d] disabled:opacity-100"
      >
        <option>{value}</option>
      </select>
      <svg width="11" height="7" fill="none" stroke={disabled ? "#a0a0a0" : "#444"} className="pointer-events-none col-start-1 row-start-1 mr-1 justify-self-end">
        <path d="M1 1l4.500 4.500L10 1" />
      </svg>
    </span>
  );
}

function PushButton({ className, primary, children }) {
  return (
    <button className={clsx("bg-[#e1e1e1]", primary ? "border-2 border-[#0078d7]" : "border border-[#adadad]", className)}>{children}</button>
  );
}

const units = [
  { label: "Coordinate Units:", value: "meters" },
  { label: "Distance Units:", value: "meters" },
  { label: "Area Units:", value: "hectares" },
];
const smoothing = [
  { label: "Smooth Text & Labels:", value: "Anti-alias" },
  { label: "Smooth Images:", value: "High Quality" },
  { label: "Smooth Lines & Borders:", value: "None" },
];

function MapOptions() {
  return (
    <Dialog title="Map Options" inactive className="top-[141px] left-[516px] w-[602px]">
      <div className="pt-3 pr-6 pb-[15px] pl-4">
        <div className="flex justify-between">
          <Group title="Map Units" className="w-[340px]">
            <div className="flex flex-col gap-3 pt-4 pr-[15px] pb-[18px] pl-[11px]">
              {units.map((u) => (
                <div key={u.label} className="flex items-center justify-between">
                  <label htmlFor={u.label}>{u.label}</label>
                  <Select id={u.label} value={u.value} className="w-[188px]" />
                </div>
              ))}
            </div>
          </Group>
          <div className="flex w-[196px] flex-col items-center">
            <Group title="Distance/Area using:" className="w-full">
              <div className="flex flex-col gap-1.5 px-[15px] py-2">
                <Radio name="distance" label="Spherical" checked className="h-4" />
                <Radio name="distance" label="Cartesian" className="h-4" />
              </div>
            </Group>
            <PushButton className="mt-3.5 h-7 w-[142px]">Image Processing...</PushButton>
            <PushButton className="mt-1.5 h-7 w-[142px]">Projection...</PushButton>
          </div>
        </div>

        <div className="mt-[13px] flex justify-between">
          <Group title="Display in Status Bar:" className="w-[220px]">
            <div className="px-[15px] pt-2.5 pb-2">
              <Radio name="status" label="Zoom (Window Width)" checked />
              <Radio name="status" label="Map Scale" />
              <Radio name="status" label="Cartographic Scale" />
              <Radio name="status" label="Cursor Location" />
            </div>
          </Group>
          <Group title="Apply Clip Region Using:" className="w-[320px]">
            <div className="px-[11px] pt-2.5">
              <Radio name="clip" label="Windows Device Clipping (all objects)" checked />
              <Radio name="clip" label="Windows Device Clipping (no points, text)" />
              <Radio name="clip" label="Erase Outside (no points, text)" />
            </div>
          </Group>
        </div>

        <div className="mt-[5px] flex justify-between">
          <Group title="When Resizing Window:" className="w-[220px]">
            <div className="px-[15px] pt-2.5 pb-9">
              <Radio name="resize" label="Fit Map to New Window" checked />
              <Radio name="resize" label="Preserve Current Scale" />
            </div>
          </Group>
          <div className="flex w-[308px] flex-col">
            <label htmlFor="coords">Display Coordinates:</label>
            <Select id="coords" value="Decimal Degrees" className="mt-3" />
            <Check label="Scroll Bars" className="mt-[11px]" />
            <Check label="Autoscroll" checked className="mt-[11px]" />
          </div>
        </div>

        <Group title="Enhanced Rendering" className="mt-[11px]">
          <div className="px-[11px] pt-2.5 pb-3">
            <Check label="Enable Enhanced Rendering" />
            <div className="mt-3 flex flex-col gap-2">
              {smoothing.map((s) => (
                <div key={s.label} className="flex items-center">
                  <label htmlFor={s.label} className="w-[190px] text-[#a0a0a0] [text-shadow:1px_1px_#fff]">{s.label}</label>
                  <Select id={s.label} value={s.value} disabled className="w-[188px]" />
                </div>
              ))}
            </div>
          </div>
        </Group>

        <div className="mt-4 -mr-2 flex justify-center gap-6">
          <PushButton className="h-[26px] w-[98px]">OK</PushButton>
          <PushButton className="h-[26px] w-[98px]">Cancel</PushButton>
          <PushButton className="h-[26px] w-[98px]">Help</PushButton>
        </div>
      </div>
    </Dialog>
  );
}

const members = ["102", "105", "108", "111", "114", "117", "103", "104", "104.5", "104.75", "105", "105.5", "105.75", "106", "106.25"];

function ChooseProjection() {
  return (
    <Dialog title="Choose Projection" className="top-[144px] left-[1135px] w-[576px]">
      <div className="flex flex-col px-4 pt-[17px] pb-[17px]">
        <label htmlFor="category">Category</label>
        <Select id="category" value="VN-2000 su dung noi bo = WGS84" className="mt-[3px]" />
        <label htmlFor="members" className="mt-[17px]">Category Members</label>
        <div className="mt-[5px] flex border border-[#828790] bg-white p-px">
          <select
            id="members"
            size={15}
            defaultValue="14"
            className="h-60 flex-1 appearance-none overflow-hidden bg-white text-[13px] leading-4 outline-none"
          >
            {members.map((m, i) => (
              <option
                key={i}
                value={i}
                className="h-4 min-h-4 px-0.5 py-0 leading-4 checked:bg-[#0078d7] checked:bg-[linear-gradient(#0078d7,#0078d7)] checked:text-white"
              >
                {`VN-2000 KT ${m} mui 3`}
              </option>
            ))}
          </select>
          <div className="ml-px flex w-5 flex-col items-center bg-[#f0f0f0]">
            <button aria-label="Scroll up" className="mb-2 grid h-5 place-items-center">
              <svg width="11" height="8" fill="none" stroke="#505050" strokeWidth="2"><path d="M1 7l4.500-5L10 7" /></svg>
            </button>
            <span className="h-[34px] w-full bg-[#cdcdcd]" />
            <button aria-label="Scroll down" className="mt-auto grid h-5 place-items-center">
              <svg width="11" height="8" fill="none" stroke="#505050" strokeWidth="2"><path d="M1 1l4.500 5L10 1" /></svg>
            </button>
          </div>
        </div>
        <div className="mt-[17px] flex justify-center gap-3">
          <PushButton primary className="h-[26px] w-[88px]">OK</PushButton>
          <PushButton className="h-[26px] w-[88px]">Cancel</PushButton>
          <PushButton className="h-[26px] w-[88px]">Help</PushButton>
        </div>
      </div>
    </Dialog>
  );
}

function StepBadge({ className, children }) {
  return (
    <span
      className={clsx(
        "absolute grid h-8 w-8 place-items-center rounded-full border-[3px] border-white bg-[#0000ff] text-[19px] leading-none font-bold text-white shadow-[1px_2px_4px_rgba(0,0,0,0.7)]",
        className
      )}
    >
      {children}
    </span>
  );
}

export default function App() {
  return (
    <div className="relative flex h-screen flex-col overflow-hidden bg-white font-['Open_Sans','Noto_Sans',sans-serif] text-black">
      <Gradients />
      <TitleBar />
      <div className="bg-linear-to-r from-[#9ebdf6] to-[#c4d9fa]">
        <MenuBar />
        <div className="flex gap-[3px] pl-[5px]">
          {toolbars.map((groups, i) => (
            <Toolbar key={i} groups={groups} />
          ))}
        </div>
      </div>
      <main className="flex min-h-0 flex-1">
        <LayerPanel />
        <MapCanvas />
        <DrawToolbar />
      </main>
      <footer className="flex h-6 items-center border-t border-[#d7d7d7] bg-[#f0f0f0] pt-0.5 pl-[3px] text-[14px] leading-5">For help on this dialog, press F1</footer>
      <MapOptions />
      <ChooseProjection />
      <StepBadge className="top-[7px] left-[388px]">1</StepBadge>
      <StepBadge className="top-[340px] left-[976px]">2</StepBadge>
    </div>
  );
}
